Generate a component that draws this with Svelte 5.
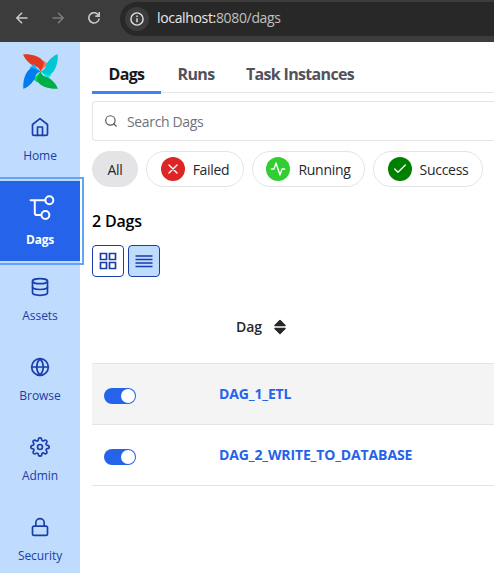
<script>
  const nav = [
    { label: 'Home', icon: 'home' },
    { label: 'Dags', icon: 'dags', active: true },
    { label: 'Assets', icon: 'database' },
    { label: 'Browse', icon: 'globe' },
    { label: 'Admin', icon: 'settings' },
    { label: 'Security', icon: 'lock' }
  ];
  const tabs = [
    { label: 'Dags', width: 69 },
    { label: 'Runs', width: 70 },
    { label: 'Task Instances', width: 138 }
  ];
  const filters = [
    { label: 'All', width: 46 },
    { label: 'Failed', width: 98, color: '#dc2626', d: 'M18 6 6 18M6 6l12 12' },
    { label: 'Running', width: 113, color: '#32cd32', d: 'M22 12h-4l-3 9L9 3l-3 9H2' },
    { label: 'Success', width: 110, color: '#008000', d: 'M20 6 9 17l-5-5' }
  ];
  const blades = [
    { angle: 0, main: '#e43921', fold: '#ff7557' },
    { angle: 90, main: '#00c7d4', fold: '#11e1ee' },
    { angle: 180, main: '#00ad46', fold: '#04d659' },
    { angle: 270, main: '#017cee', fold: '#0cb6ff' }
  ];
  const dags = $state([
    { id: 'DAG_1_ETL', on: true },
    { id: 'DAG_2_WRITE_TO_DATABASE', on: true }
  ]);
</script>

<div class="page">
  <header class="browser">
    <svg class="arrow" viewBox="0 0 12 12"><path d="M11.5 6H1M6 .8.8 6 6 11.2" /></svg>
    <svg class="arrow dim" viewBox="0 0 12 12"><path d="M.5 6H11M6 .8 11.2 6 6 11.2" /></svg>
    <svg class="reload" viewBox="0 0 12 12"><path d="M10.4 3A5.2 5.2 0 1 0 11.2 6.5M11.3.1v4H7.3" /></svg>
    <div class="address">
      <span class="info">
        <svg viewBox="0 0 14 14"><circle cx="7" cy="7" r="6.1" /><path d="M7 6.2v4M7 3.6v1.5" /></svg>
      </span>
      <span class="url">localhost:<span>8080/dags</span></span>
    </div>
  </header>

  <div class="body">
    <nav>
      <div class="logo">
        <svg viewBox="0 0 35 35">
          {#each blades as b}
            <g transform="rotate({b.angle} 17.5 17.5)">
              <path fill={b.fold} d="M17.500 17.500 20 6.500C22.500 7.500 24 9 25 11.300 22 12 20 15 17.500 17.500Z" />
              <path fill={b.main} d="M.2.3C8-.2 17 2 20.300 7.500 21.800 10.500 19.500 13.500 17.500 17.500 15.500 12.500 13 12.500 10 11.500 6 9.500 1 4 .2.3Z" />
            </g>
          {/each}
        </svg>
      </div>
      {#each nav as item}
        <button class="item" class:active={item.active}>
          <svg viewBox="0 0 24 24">
            {#if item.icon === 'home'}
              <path d="m3 9 9-7 9 7v11a2 2 0 0 1-2 2H5a2 2 0 0 1-2-2z" /><path d="M9 22V12h6v10" />
            {:else if item.icon === 'dags'}
              <path d="M2.500 5h14M6.500 5v12.200a2 2 0 0 0 2 2h4.200" /><circle cx="20.500" cy="5" r="3.800" /><circle cx="16.700" cy="19.200" r="3.800" />
            {:else if item.icon === 'database'}
              <ellipse cx="12" cy="5" rx="9" ry="3" /><path d="M21 12c0 1.660-4 3-9 3s-9-1.340-9-3" /><path d="M3 5v14c0 1.660 4 3 9 3s9-1.340 9-3V5" />
            {:else if item.icon === 'globe'}
              <circle cx="12" cy="12" r="10" /><path d="M2 12h20" /><path d="M12 2a15.300 15.300 0 0 1 4 10 15.300 15.300 0 0 1-4 10 15.300 15.300 0 0 1-4-10 15.300 15.300 0 0 1 4-10z" />
            {:else if item.icon === 'settings'}
              <circle cx="12" cy="12" r="3" /><path d="M19.400 15a1.650 1.650 0 0 0 .33 1.820l.06.06a2 2 0 0 1 0 2.830 2 2 0 0 1-2.830 0l-.06-.06a1.650 1.650 0 0 0-1.820-.33 1.650 1.650 0 0 0-1 1.510V21a2 2 0 0 1-2 2 2 2 0 0 1-2-2v-.09A1.650 1.650 0 0 0 9 19.400a1.650 1.650 0 0 0-1.820.33l-.06.06a2 2 0 0 1-2.830 0 2 2 0 0 1 0-2.830l.06-.06a1.650 1.650 0 0 0 .33-1.820 1.650 1.650 0 0 0-1.510-1H3a2 2 0 0 1-2-2 2 2 0 0 1 2-2h.09A1.650 1.650 0 0 0 4.600 9a1.650 1.650 0 0 0-.33-1.820l-.06-.06a2 2 0 0 1 0-2.830 2 2 0 0 1 2.830 0l.06.06a1.650 1.650 0 0 0 1.820.33H9a1.650 1.650 0 0 0 1-1.510V3a2 2 0 0 1 2-2 2 2 0 0 1 2 2v.09a1.650 1.650 0 0 0 1 1.510 1.650 1.650 0 0 0 1.820-.33l.06-.06a2 2 0 0 1 2.830 0 2 2 0 0 1 0 2.830l-.06.06a1.650 1.650 0 0 0-.33 1.820V9a1.650 1.650 0 0 0 1.510 1H21a2 2 0 0 1 2 2 2 2 0 0 1-2 2h-.09a1.650 1.650 0 0 0-1.510 1z" />
            {:else}
              <rect x="3" y="11" width="18" height="11" rx="2" /><path d="M7 11V7a5 5 0 0 1 10 0v4" />
            {/if}
          </svg>
          <span>{item.label}</span>
        </button>
      {/each}
    </nav>

    <main>
      <div class="tabs">
        {#each tabs as tab, i}
          <div class="tab" class:current={i === 0} style:width="{tab.width}px"><span>{tab.label}</span></div>
        {/each}
      </div>

      <div class="search">
        <svg viewBox="0 0 24 24"><circle cx="11" cy="11" r="8" /><path d="m21 21-4.350-4.350" /></svg>
        <span>Search Dags</span>
      </div>

      <div class="filters">
        {#each filters as f, i}
          <div class="chip" class:selected={i === 0} style:width="{f.width}px">
            {#if f.d}
              <span class="badge" style:background={f.color}>
                <svg viewBox="0 0 24 24"><path d={f.d} /></svg>
              </span>
            {/if}
            <span>{f.label}</span>
          </div>
        {/each}
      </div>

      <h2>2 Dags</h2>

      <div class="views">
        <button class="view" aria-label="Card view">
          <svg viewBox="0 0 18 18"><path d="M1.500 1.500h6v6h-6zM10.500 1.500h6v6h-6zM1.500 10.500h6v6h-6zM10.500 10.500h6v6h-6z" /></svg>
        </button>
        <button class="view on" aria-label="Table view">
          <svg viewBox="0 0 18 18"><path d="M.5 4h17M.5 7.500h17M.5 11h17M.5 14.500h17" /></svg>
        </button>
      </div>

      <div class="head">
        <span>Dag</span>
        <svg viewBox="0 0 12 16"><path d="M6 1.500 1 6.500h10zM6 14.500 1 9.500h10z" /></svg>
      </div>
      {#each dags as dag}
        <div class="row">
          <button class="toggle" class:off={!dag.on} aria-label={dag.id} onclick={() => (dag.on = !dag.on)}><i></i></button>
          <b>{dag.id}</b>
        </div>
      {/each}
    </main>
  </div>
</div>

<style>
  :global(body) { background: #fff; }
  .page {
    width: 494px; height: 573px; overflow: hidden;
    display: flex; flex-direction: column;
    font-family: "Open Sans", "Noto Sans", sans-serif;
    font-size: 14px; color: #27272a;
  }
  .page * { box-sizing: border-box; }
  button { font: inherit; padding: 0; border: 0; background: none; color: inherit; }
  svg { display: block; fill: none; stroke: currentColor; stroke-width: 2; stroke-linecap: round; stroke-linejoin: round; flex: none; }
  span, b, h2 { white-space: nowrap; }

  .browser {
    height: 42px; flex: none; background: #3c3c3c; color: #c7c7c7;
    display: flex; align-items: center; padding: 0 0 6px 16px;
  }
  .browser svg { stroke-width: 1.600; stroke-linecap: butt; stroke-linejoin: miter; }
  .arrow { width: 12px; height: 12px; margin-right: 24px; }
  .arrow.dim { color: #7b7b7b; }
  .reload { width: 12px; height: 12px; }
  .address {
    margin-left: 20px; flex: 1; height: 34px; margin-top: 1px; background: #282828;
    border-radius: 17px 0 0 17px; display: flex; align-items: center; padding-left: 5px;
  }
  .info { width: 24px; height: 24px; border-radius: 50%; background: #3c3c3c; display: grid; place-items: center; color: #e3e3e3; }
  .info svg { width: 14px; height: 14px; stroke-width: 1.400; }
  .url { margin: -2px 0 0 8px; color: #e8e8e8; letter-spacing: -0.340px; }
  .url span { color: #c0c0c0; }

  .body { flex: 1; display: flex; min-height: 0; }
  nav { width: 80px; flex: none; background: #bfdbfe; color: #1a3ea8; }
  .logo { height: 59px; padding: 12px 0 0 23px; }
  .logo svg { width: 35px; height: 35px; stroke: none; }
  .item {
    width: 80px; height: 80px; display: flex; flex-direction: column; align-items: center;
    padding-top: 16px; font-size: 12px; font-weight: 500; line-height: 16px;
  }
  .item svg { width: 20px; height: 20px; }
  .item span { margin-top: 11px; letter-spacing: -0.050px; }
  .item.active { background: #2563eb; color: #fff; font-weight: 700; outline: 2px solid #60a5fa; outline-offset: 2px; position: relative; padding-top: 14px; }
  .item.active svg { width: 25px; height: 25px; stroke-width: 1.900; overflow: visible; }
  .item.active span { margin-top: 12px; letter-spacing: -0.250px; }

  main { flex: 1; min-width: 0; padding-left: 12px; background: #fff; }
  .tabs { height: 52px; display: flex; border-bottom: 1px solid #e4e4e7; margin-top: -1px; }
  .tab {
    height: 53px; display: flex; justify-content: center; padding-top: 21px;
    font-size: 16px; line-height: 24px; font-weight: 700; color: #52525b; letter-spacing: -0.680px;
  }
  .tab.current { color: #18181b; border-bottom: 3px solid #3b82f6; }
  .search {
    height: 40px; margin-top: 8px; border: 1px solid #e4e4e7; border-right: 0; border-radius: 4px 0 0 4px;
    display: flex; align-items: center; padding-left: 11px; gap: 9px; color: #71717a; letter-spacing: -0.350px;
  }
  .search svg { width: 14px; height: 14px; color: #52525b; }
  .filters { display: flex; gap: 8px; margin-top: 10px; }
  .chip {
    height: 36px; flex: none; border: 1px solid #e4e4e7; border-radius: 18px; letter-spacing: -0.300px;
    display: flex; align-items: center; justify-content: center; gap: 8px;
  }
  .chip.selected { background: #e4e4e7; }
  .badge { width: 24px; height: 24px; border-radius: 50%; display: grid; place-items: center; color: #fff; }
  .badge svg { width: 16px; height: 16px; stroke-width: 2; }
  h2 { margin: 22px 0 0; font-size: 16px; line-height: 24px; font-weight: 600; color: #000; letter-spacing: -0.200px; }
  .views { display: flex; gap: 4px; margin-top: 12px; }
  .view { width: 32px; height: 32px; border: 1px solid #1a3ea8; border-radius: 4px; color: #1a3ea8; display: grid; place-items: center; }
  .view svg { width: 18px; height: 18px; stroke-width: 1.700; stroke-linecap: butt; stroke-linejoin: miter; }
  .view.on { background: #bfdbfe; }
  .head { height: 86px; padding: 40px 0 0 144px; display: flex; gap: 12px; font-weight: 600; line-height: 20px; letter-spacing: -0.100px; }
  .head svg { width: 12px; height: 16px; margin-top: 2px; fill: currentColor; stroke-width: 1.500; }
  .row { height: 61px; border-top: 1px solid #e4e4e7; display: flex; align-items: center; padding-left: 12px; }
  .row:nth-last-child(2) { background: #f4f4f4; }
  .row:last-child { height: 62px; border-bottom: 1px solid #e4e4e7; }
  .toggle { width: 32px; height: 16px; margin-top: 4px; border-radius: 8px; background: #2563eb; padding: 1px; display: flex; justify-content: flex-end; }
  .toggle i { width: 14px; height: 14px; border-radius: 50%; background: #fff; }
  .toggle.off { justify-content: flex-start; background: #d4d4d8; }
  .row b { margin: -2px 0 0 83px; color: #2563eb; font-weight: 700; letter-spacing: -0.130px; }
</style>
